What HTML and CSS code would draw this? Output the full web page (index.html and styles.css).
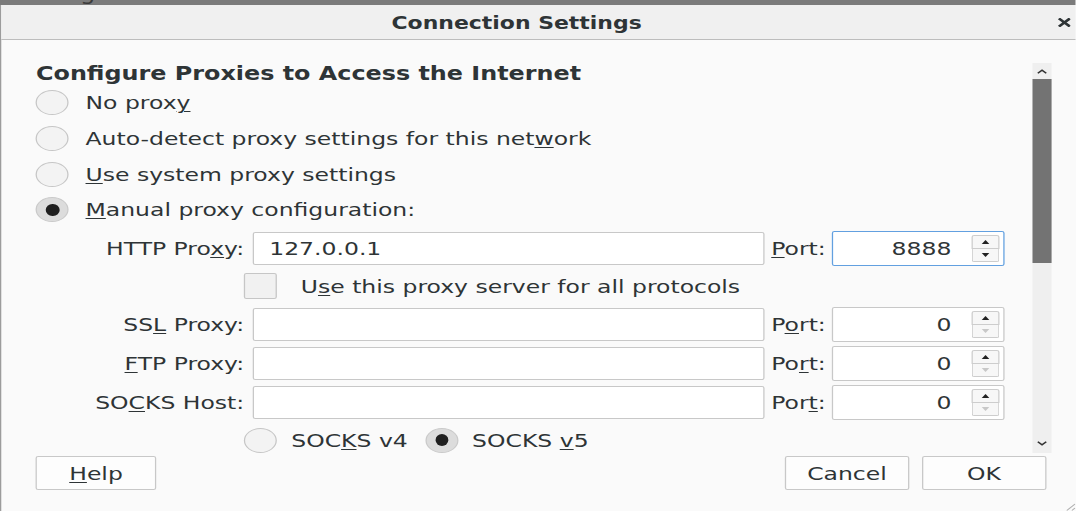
FILE: index.html
```html
<!DOCTYPE html>
<html>
<head>
<meta charset="utf-8">
<link rel="stylesheet" href="styles.css">
</head>
<body>
<div class="stage">
  <div class="backdrop"><span class="backdrop-text">Configure how Firefox connects to the Internet.</span></div>
  <div class="dialog">
    <div class="titlebar">
      <span></span>
      <span class="title">Connection Settings</span>
      <span class="close-wrap">
        <svg class="close" viewBox="0 0 10 9" width="10.2" height="9"><path d="M1.6 1.3L8.4 7.7M8.4 1.3L1.6 7.7" stroke="#2e3436" stroke-width="2.4" stroke-linecap="square"/></svg>
      </span>
    </div>
    <div class="main">
      <div class="scrollarea">
        <div class="content">
          <div class="heading">Configure Proxies to Access the Internet</div>
          <div class="radio-row"><span class="radio"></span><span>No prox<u>y</u></span></div>
          <div class="radio-row"><span class="radio"></span><span>Auto-detect proxy settings for this net<u>w</u>ork</span></div>
          <div class="radio-row"><span class="radio"></span><span><u>U</u>se system proxy settings</span></div>
          <div class="radio-row"><span class="radio checked"></span><span><u>M</u>anual proxy configuration:</span></div>

          <div class="proxy-row first">
            <span class="plabel">HTTP Pro<u>x</u>y:</span>
            <span class="input"><span class="value">127.0.0.1</span></span>
            <span class="portlabel"><u>P</u>ort:</span>
            <span class="spin focused"><span class="spin-value">8888</span><span class="spin-btns"><span class="sb up"></span><span class="sb down"></span></span></span>
          </div>
          <div class="check-row"><span class="checkbox"></span><span>U<u>s</u>e this proxy server for all protocols</span></div>
          <div class="proxy-row">
            <span class="plabel">SS<u>L</u> Proxy:</span>
            <span class="input"></span>
            <span class="portlabel">P<u>o</u>rt:</span>
            <span class="spin"><span class="spin-value">0</span><span class="spin-btns"><span class="sb up"></span><span class="sb down off"></span></span></span>
          </div>
          <div class="proxy-row gap6">
            <span class="plabel"><u>F</u>TP Proxy:</span>
            <span class="input"></span>
            <span class="portlabel">Po<u>r</u>t:</span>
            <span class="spin"><span class="spin-value">0</span><span class="spin-btns"><span class="sb up"></span><span class="sb down off"></span></span></span>
          </div>
          <div class="proxy-row gap7">
            <span class="plabel">SO<u>C</u>KS Host:</span>
            <span class="input"></span>
            <span class="portlabel">Por<u>t</u>:</span>
            <span class="spin"><span class="spin-value">0</span><span class="spin-btns"><span class="sb up"></span><span class="sb down off"></span></span></span>
          </div>
          <div class="socks-row">
            <span class="radio"></span><span class="socks-label">SOC<u>K</u>S v4</span>
            <span class="radio checked"></span><span>SOCKS <u>v</u>5</span>
          </div>
        </div>
        <div class="scrollbar">
          <div class="sc-btn"><svg viewBox="0 0 10 6" width="9" height="5"><path d="M1 5L5 1.5L9 5" fill="none" stroke="#333" stroke-width="1.6"/></svg></div>
          <div class="thumb"></div>
          <div class="track"></div>
          <div class="sc-btn down"><svg viewBox="0 0 10 6" width="9" height="5"><path d="M1 1L5 4.5L9 1" fill="none" stroke="#333" stroke-width="1.6"/></svg></div>
        </div>
      </div>
      <div class="buttons">
        <span class="btn help"><u>H</u>elp</span>
        <span class="spacer"></span>
        <span class="btn">Cancel</span>
        <span class="btn">OK</span>
      </div>
      <div class="footer">
        <svg class="grip" viewBox="0 0 10 10" width="10" height="10"><path d="M9.5 3L3 9.5M9.5 7L7 9.5" stroke="#b0b0b0" stroke-width="1"/></svg>
      </div>
    </div>
  </div>
</div>
</body>
</html>
```

FILE: styles.css
```css
html, body {
  margin: 0;
  padding: 0;
  overflow: hidden;
  background: #fafafa;
}

.stage {
  width: 847.2px;
  height: 511px;
  transform: scaleX(1.27);
  transform-origin: 0 0;
  font-family: "DejaVu Sans", "Liberation Sans", sans-serif;
  font-size: 18.5px;
  color: #2e3436;
  display: flex;
  flex-direction: column;
  overflow: hidden;
}

u {
  text-decoration: underline;
  text-underline-offset: 2px;
  text-decoration-thickness: 1px;
}

.backdrop {
  height: 5px;
  background: #7b7b7b;
  overflow: hidden;
  flex: none;
}

.backdrop-text {
  display: block;
  margin-top: -17px;
  margin-left: 14px;
  font-size: 19px;
  line-height: 20px;
  color: #3a3a3a;
}

.dialog {
  flex: 1;
  display: flex;
  flex-direction: column;
  border-left: 1px solid #9c9c9c;
  background: #fafafa;
}

.titlebar {
  height: 34px;
  flex: none;
  background: #f0f0f0;
  border-bottom: 1px solid #bdbdbd;
  display: grid;
  grid-template-columns: 1fr auto 1fr;
  align-items: center;
}

.title {
  font-weight: bold;
  font-size: 17.3px;
  color: #2e3436;
  padding-top: 1px;
  margin-right: 34.6px;
}

.close-wrap {
  justify-self: end;
  display: flex;
  align-items: center;
  margin-right: 3.8px;
  padding-top: 1px;
}

.close {
  display: block;
}

.main {
  flex: 1;
  display: flex;
  flex-direction: column;
}

.scrollarea {
  height: 413px;
  flex: none;
  display: flex;
  overflow: hidden;
}

.content {
  width: 811.6px;
  flex: none;
  padding-top: 22px;
  padding-left: 27.35px;
  box-sizing: border-box;
  overflow: hidden;
}

.heading {
  font-weight: bold;
  font-size: 18.8px;
  height: 23px;
  line-height: 23px;
}

.radio-row {
  height: 35.7px;
  display: flex;
  align-items: center;
  gap: 13px;
}

.radio {
  width: 26px;
  height: 25px;
  box-sizing: border-box;
  border-radius: 50%;
  border: 1px solid #c6c6c6;
  background: #f3f3f3;
  flex: none;
  display: flex;
  align-items: center;
  justify-content: center;
}

.radio.checked {
  background: #dcdcdc;
  border-color: #cacaca;
}

.radio.checked::after {
  content: "";
  width: 10.5px;
  height: 12px;
  border-radius: 50%;
  background: #1f1f1f;
}

.proxy-row {
  display: flex;
  align-items: center;
  height: 34px;
}

.proxy-row.first {
  margin-top: 3.5px;
}

.proxy-row.gap6 {
  margin-top: 5px;
}

.proxy-row.gap7 {
  margin-top: 5px;
}

.plabel {
  width: 170.25px;
  flex: none;
  text-align: right;
  padding-right: 6.3px;
  box-sizing: border-box;
  white-space: nowrap;
}

.input {
  width: 403.2px;
  height: 33px;
  flex: none;
  box-sizing: border-box;
  border: 1px solid #c8c8c8;
  border-radius: 2px;
  background: #ffffff;
  display: flex;
  align-items: center;
  padding-left: 12.4px;
}

.portlabel {
  width: 53.5px;
  flex: none;
  padding-left: 5.5px;
  box-sizing: border-box;
  white-space: nowrap;
}

.spin {
  width: 135.5px;
  height: 35px;
  flex: none;
  box-sizing: border-box;
  border: 1px solid #c8c8c8;
  border-radius: 2px;
  background: #ffffff;
  display: flex;
  align-items: center;
  justify-content: flex-end;
  padding-right: 3px;
}

.spin.focused {
  border-color: #62a0e0;
}

.spin-value {
  margin-right: 15.7px;
}

.spin-btns {
  width: 22px;
  height: 27px;
  display: flex;
  flex-direction: column;
}

.sb {
  flex: 1;
  border: 1px solid #cdcdcd;
  background: #f7f7f7;
  display: flex;
  align-items: center;
  justify-content: center;
}

.sb.up {
  border-radius: 2px 2px 0 0;
}

.sb.down {
  border-top: none;
  border-radius: 0 0 2px 2px;
}

.sb.up::after {
  content: "";
  border-left: 3.5px solid transparent;
  border-right: 3.5px solid transparent;
  border-bottom: 4px solid #222;
}

.sb.down::after {
  content: "";
  border-left: 3.5px solid transparent;
  border-right: 3.5px solid transparent;
  border-top: 4px solid #222;
}

.sb.down.off::after {
  border-top-color: #c8c8c8;
}

.check-row {
  height: 42px;
  display: flex;
  align-items: center;
  padding-left: 164px;
  gap: 19.3px;
}

.checkbox {
  width: 25.2px;
  height: 26px;
  box-sizing: border-box;
  border: 1px solid #c6c6c6;
  border-radius: 2px;
  background: #f1f1f1;
  flex: none;
}

.socks-row {
  height: 34px;
  margin-top: 4px;
  display: flex;
  align-items: center;
  padding-left: 164px;
  gap: 11px;
}

.socks-label {
  margin-right: 2.7px;
}

.scrollbar {
  width: 15.7px;
  flex: none;
  margin-top: 23px;
  height: 390px;
  background: #efefef;
  display: flex;
  flex-direction: column;
}

.sc-btn {
  height: 16px;
  display: flex;
  align-items: center;
  justify-content: center;
}

.sc-btn.down {
  height: 20px;
}

.thumb {
  height: 184px;
  background: #737373;
}

.track {
  flex: 1;
}

.buttons {
  margin-top: 3px;
  height: 34px;
  display: flex;
  padding-left: 27.35px;
  padding-right: 23.6px;
  gap: 10.3px;
}

.spacer {
  flex: 1;
}

.btn {
  width: 97.6px;
  height: 34px;
  box-sizing: border-box;
  border: 1px solid #c8c8c8;
  border-radius: 2px;
  background: #fdfdfd;
  display: flex;
  align-items: center;
  justify-content: center;
  color: #2e3436;
}

.btn.help {
  width: 94.5px;
}

.footer {
  flex: 1;
  display: flex;
  justify-content: flex-end;
  align-items: flex-end;
}

.grip {
  display: block;
}
```
